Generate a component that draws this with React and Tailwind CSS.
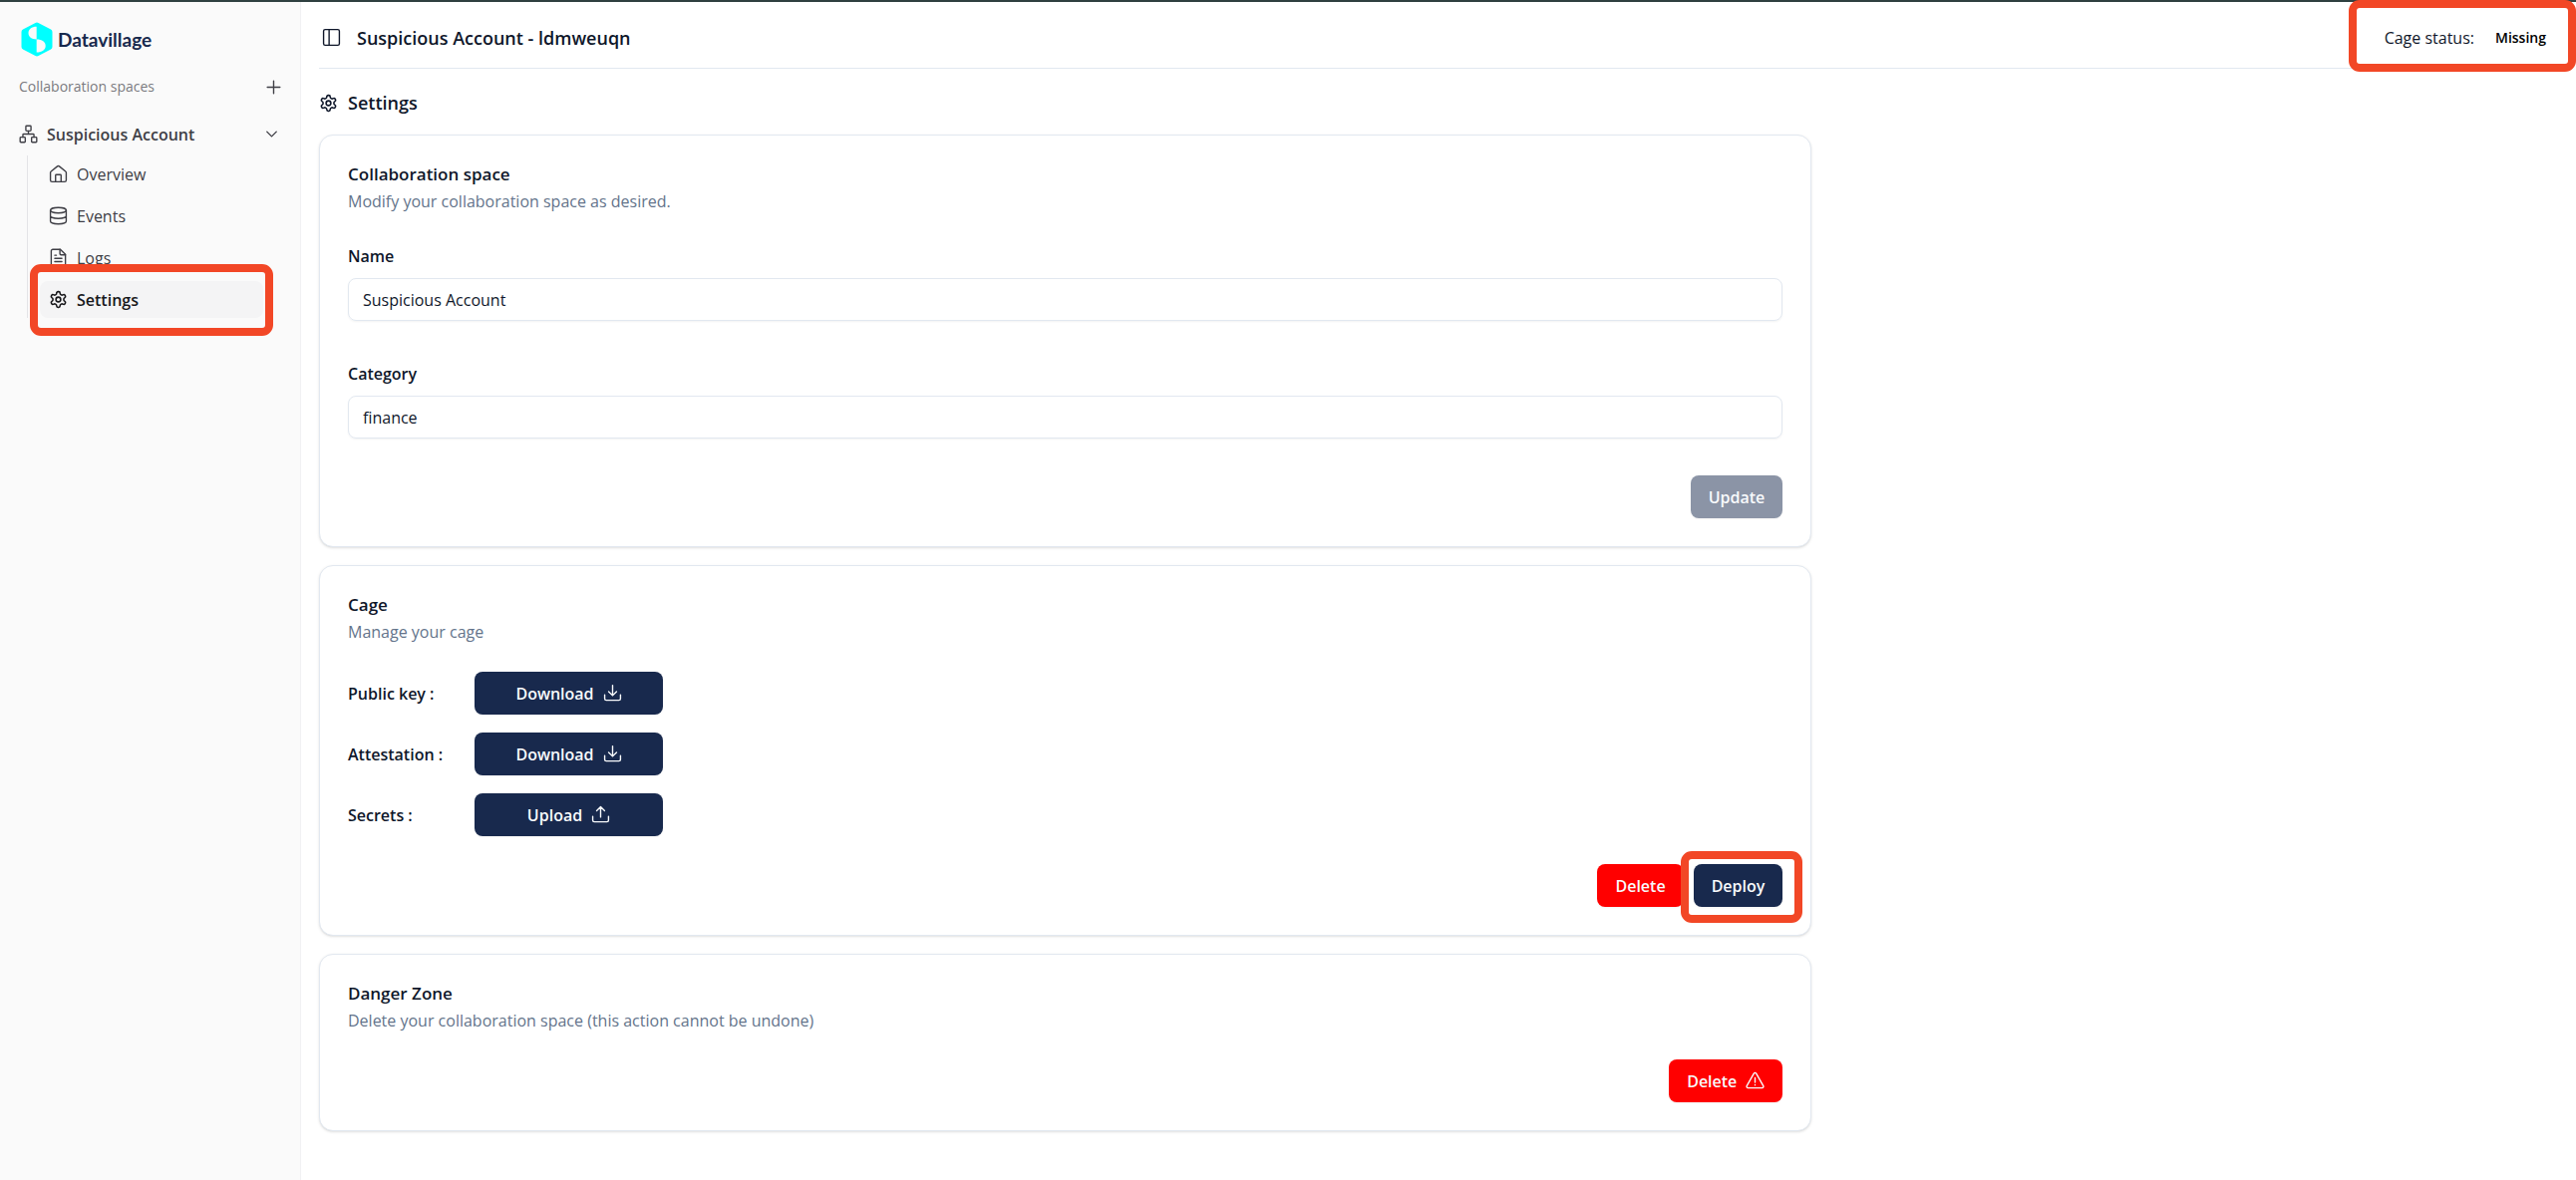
import React from "react";

function Icon({ children, ...rest }) {
  return (
    <svg
      viewBox="0 0 24 24"
      fill="none"
      stroke="currentColor"
      strokeWidth="1.75"
      strokeLinecap="round"
      strokeLinejoin="round"
      aria-hidden="true"
      className="size-[19px] shrink-0"
      {...rest}
    >
      {children}
    </svg>
  );
}

const NetworkIcon = () => (
  <Icon>
    <rect x="16" y="16" width="6.500" height="6.500" rx="1" />
    <rect x="1.500" y="16" width="6.500" height="6.500" rx="1" />
    <rect x="8.750" y="1.500" width="6.500" height="6.500" rx="1" />
    <path d="M5 16v-3a1 1 0 0 1 1-1h12a1 1 0 0 1 1 1v3M12 12V8" />
  </Icon>
);
const HomeIcon = () => (
  <Icon>
    <path d="M8.500 22v-8a1 1 0 0 1 1-1h5a1 1 0 0 1 1 1v8" />
    <path d="M2 10.500a2 2 0 0 1 .8-1.600l8-6.500a2 2 0 0 1 2.400 0l8 6.500a2 2 0 0 1 .8 1.600V20a2 2 0 0 1-2 2H4a2 2 0 0 1-2-2z" />
  </Icon>
);
const DatabaseIcon = () => (
  <Icon>
    <ellipse cx="12" cy="5" rx="10" ry="3.500" />
    <path d="M2 5v14c0 1.900 4.500 3.500 10 3.500s10-1.600 10-3.500V5M2 12c0 1.900 4.500 3.500 10 3.500s10-1.600 10-3.500" />
  </Icon>
);
const FileIcon = () => (
  <Icon>
    <path d="M14.500 1.500H5a2 2 0 0 0-2 2v17a2 2 0 0 0 2 2h14a2 2 0 0 0 2-2V8z" />
    <path d="M14 1.500V7a1.500 1.500 0 0 0 1.500 1.500H21M7.500 9h2M7.500 13h9M7.500 17h9" />
  </Icon>
);
const GearIcon = () => (
  <Icon strokeWidth="2">
    <path d="M12.220 2h-.44a2 2 0 0 0-2 2v.18a2 2 0 0 1-1 1.730l-.43.25a2 2 0 0 1-2 0l-.15-.08a2 2 0 0 0-2.730.730l-.22.38a2 2 0 0 0 .730 2.730l.15.1a2 2 0 0 1 1 1.720v.51a2 2 0 0 1-1 1.740l-.15.09a2 2 0 0 0-.730 2.730l.22.38a2 2 0 0 0 2.730.730l.15-.08a2 2 0 0 1 2 0l.43.25a2 2 0 0 1 1 1.730V20a2 2 0 0 0 2 2h.44a2 2 0 0 0 2-2v-.18a2 2 0 0 1 1-1.730l.43-.25a2 2 0 0 1 2 0l.15.08a2 2 0 0 0 2.730-.730l.22-.39a2 2 0 0 0-.730-2.730l-.15-.08a2 2 0 0 1-1-1.740v-.5a2 2 0 0 1 1-1.740l.15-.09a2 2 0 0 0 .730-2.730l-.22-.38a2 2 0 0 0-2.730-.730l-.15.08a2 2 0 0 1-2 0l-.43-.25a2 2 0 0 1-1-1.730V4a2 2 0 0 0-2-2z" />
    <circle cx="12" cy="12" r="3" />
  </Icon>
);
const PanelIcon = () => (
  <Icon>
    <rect x="2" y="2" width="20" height="20" rx="2" />
    <path d="M9 2v20" />
  </Icon>
);
const DownloadIcon = () => (
  <Icon>
    <path d="M2 14v5a2 2 0 0 0 2 2h16a2 2 0 0 0 2-2v-5M12 2v13M7 10l5 5 5-5" />
  </Icon>
);
const UploadIcon = () => (
  <Icon>
    <path d="M2 14v5a2 2 0 0 0 2 2h16a2 2 0 0 0 2-2v-5M12 15V2M7 7l5-5 5 5" />
  </Icon>
);
const WarningIcon = () => (
  <Icon>
    <path d="M10.500 2.700 1.500 18.500a1.700 1.700 0 0 0 1.500 2.500h18a1.700 1.700 0 0 0 1.500-2.500L13.500 2.700a1.700 1.700 0 0 0-3 0zM12 8v6M12 17v.3" />
  </Icon>
);

function Logo() {
  return (
    <a href="#home" className="flex items-center gap-[5px] pl-[2px] text-[#18294d]">
      <svg viewBox="0 0 32 35" aria-hidden="true" className="h-[35px] w-8 shrink-0">
        <path d="M14.500 1a3 3 0 0 1 3 0L30 7.500a3 3 0 0 1 1.500 2.500v15a3 3 0 0 1-1.500 2.500L17.500 34a3 3 0 0 1-3 0L2 27.500A3 3 0 0 1 .5 25V10A3 3 0 0 1 2 7.500z" fill="#00ffff" />
        <path d="M15.700 4.700v12.800c-5 0-8.200-2.500-8.200-6.400s3.200-6.400 8.200-6.400zM15.700 17.500c5.500 0 9 2.500 9 6.500s-3.500 6.500-9 6.500z" fill="#fafafa" />
      </svg>
      <span className="font-['Lato',sans-serif] text-[19px] font-bold leading-6">Datavillage</span>
    </a>
  );
}

function NavItem({ icon, label, active }) {
  return (
    <li>
      <a
        href={"#" + label.toLowerCase()}
        aria-current={active ? "page" : undefined}
        className={
          "flex h-[37px] items-center gap-[9px] rounded-lg px-[9px] " +
          (active ? "bg-[#f4f4f5] font-semibold text-[#18181b]" : "text-[#3f3f46]")
        }
      >
        {icon}
        <span>{label}</span>
      </a>
    </li>
  );
}

function Card({ title, description, children }) {
  return (
    <section className="rounded-[14px] border border-[#e2e8f0] bg-white px-7 pt-[26px] pb-7 shadow-sm">
      <h2 className="text-[17px] font-semibold leading-[26px]">{title}</h2>
      <p className="mt-px leading-[26px] text-[#64748b]">{description}</p>
      {children}
    </section>
  );
}

function Field({ id, label, value }) {
  return (
    <div>
      <label htmlFor={id} className="block font-semibold leading-6">{label}</label>
      <input
        id={id}
        defaultValue={value}
        className="mt-[10px] block h-[43px] w-full rounded-lg border border-[#e2e8f0] px-[14px] shadow-xs outline-none"
      />
    </div>
  );
}

function Button({ tone = "bg-[#18294d]", className = "", children, ...rest }) {
  return (
    <button
      type="button"
      className={"flex h-[43px] items-center justify-center gap-[9px] rounded-lg px-[18px] font-semibold text-[#f8fafc] shadow-xs " + tone + " " + className}
      {...rest}
    >
      {children}
    </button>
  );
}

function CageRow({ label, action, icon }) {
  return (
    <div className="flex items-center">
      <span className="w-[127px] font-semibold">{label}</span>
      <Button className="w-[189px]">
        {action}
        {icon}
      </Button>
    </div>
  );
}

function Highlight({ className }) {
  return <span aria-hidden="true" className={"pointer-events-none absolute z-10 rounded-[11px] border-8 border-[#f24726] " + className} />;
}

export default function App() {
  return (
    <div className="flex min-h-screen flex-col border-t-2 border-[#2f4040] bg-white font-['Open_Sans',sans-serif] text-base text-[#0f172a]">
      <div className="flex grow">
        <aside className="w-[302px] shrink-0 border-r border-[#f1f1f3] bg-[#fafafa] px-[19px] pt-5 text-[#3f3f46]">
          <Logo />
          <div className="mt-4 flex h-7 items-center justify-between">
            <span className="text-sm text-[#7b7b80]">Collaboration spaces</span>
            <button type="button" aria-label="Add collaboration space" className="-mr-[2px]">
              <Icon><path d="M4 12h16M12 4v16" /></Icon>
            </button>
          </div>
          <button type="button" className="mt-[15px] flex h-[37px] w-full items-center gap-[9px] font-semibold">
            <NetworkIcon />
            <span className="grow text-left">Suspicious Account</span>
            <Icon><path d="m6 9 6 6 6-6" /></Icon>
          </button>
          <ul className="relative ml-2 mr-[18px] mt-[3px] flex flex-col gap-[5px] border-l border-[#e4e4e7] pl-3">
            <NavItem icon={<HomeIcon />} label="Overview" />
            <NavItem icon={<DatabaseIcon />} label="Events" />
            <NavItem icon={<FileIcon />} label="Logs" />
            <NavItem icon={<GearIcon />} label="Settings" active />
            <Highlight className="-bottom-[18px] left-[2px] -right-[10px] h-[72px]" />
          </ul>
        </aside>

        <main className="min-w-0 grow px-[18px]">
          <header className="relative flex h-[67px] items-center justify-between border-b border-[#e2e8f0] pt-[5px]">
            <div className="flex items-center gap-4 pl-[3px]">
              <button type="button" aria-label="Toggle sidebar"><PanelIcon /></button>
              <h1 className="text-lg font-semibold">Suspicious Account - ldmweuqn</h1>
            </div>
            <div className="flex items-center gap-[21px] pr-3">
              <span>Cage status:</span>
              <span className="text-sm font-semibold text-black">Missing</span>
            </div>
            <Highlight className="-right-[18px] -top-[2px] h-[72px] w-[228px]" />
          </header>

          <div className="mt-5 flex h-7 items-center gap-[10px]">
            <GearIcon />
            <h2 className="text-lg font-semibold">Settings</h2>
          </div>

          <div className="mt-[18px] flex w-2/3 flex-col gap-[18px]">
            <Card title="Collaboration space" description="Modify your collaboration space as desired.">
              <form className="mt-[30px] flex flex-col gap-[41px]">
                <Field id="name" label="Name" value="Suspicious Account" />
                <Field id="category" label="Category" value="finance" />
                <div className="-mt-1 flex justify-end">
                  <Button tone="bg-[#8b94a6]" disabled>Update</Button>
                </div>
              </form>
            </Card>

            <Card title="Cage" description="Manage your cage">
              <div className="mt-[27px] flex flex-col gap-[18px]">
                <CageRow label="Public key :" action="Download" icon={<DownloadIcon />} />
                <CageRow label="Attestation :" action="Download" icon={<DownloadIcon />} />
                <CageRow label="Secrets :" action="Upload" icon={<UploadIcon />} />
              </div>
              <div className="mt-7 flex justify-end gap-[10px]">
                <Button tone="bg-[#ff0000]">Delete</Button>
                <div className="relative">
                  <Button>Deploy</Button>
                  <Highlight className="-left-[13px] -right-[20px] -top-[13px] h-[72px]" />
                </div>
              </div>
            </Card>

            <Card title="Danger Zone" description="Delete your collaboration space (this action cannot be undone)">
              <div className="mt-[26px] flex justify-end">
                <Button tone="bg-[#ff0000]">
                  Delete
                  <WarningIcon />
                </Button>
              </div>
            </Card>
          </div>
        </main>
      </div>
    </div>
  );
}
